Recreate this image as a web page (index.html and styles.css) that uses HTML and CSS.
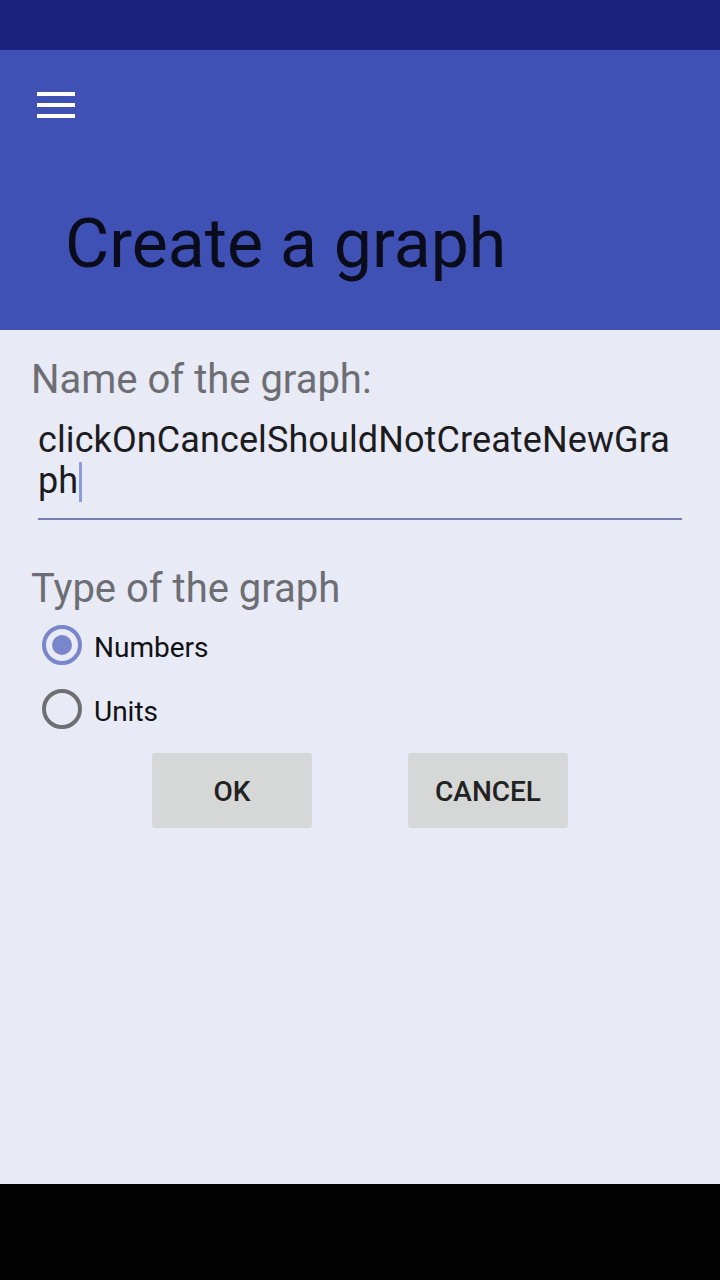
FILE: index.html
```html
<!DOCTYPE html>
<html lang="en">
<head>
<meta charset="utf-8">
<title>Create a graph</title>
<link rel="stylesheet" href="styles.css">
</head>
<body>
<div class="screen">
  <div class="status-bar"></div>
  <header class="app-bar">
    <div class="menu-btn">
      <svg width="38" height="26" viewBox="0 0 38 26" aria-hidden="true">
        <rect x="0" y="0" width="38" height="4" fill="#ffffff"/>
        <rect x="0" y="11" width="38" height="4" fill="#ffffff"/>
        <rect x="0" y="22" width="38" height="4" fill="#ffffff"/>
      </svg>
    </div>
    <h1 class="title">Create a graph</h1>
  </header>
  <main class="content">
    <div class="label name-label">Name of the graph:</div>
    <div class="field"><span class="value">clickOnCancelShouldNotCreateNewGraph</span><span class="cursor"></span></div>
    <div class="label type-label">Type of the graph</div>
    <div class="radios">
      <div class="radio-row">
        <span class="radio checked"><span class="dot"></span></span>
        <span class="radio-text">Numbers</span>
      </div>
      <div class="radio-row">
        <span class="radio"></span>
        <span class="radio-text">Units</span>
      </div>
    </div>
    <div class="buttons">
      <div class="btn">OK</div>
      <div class="btn">CANCEL</div>
    </div>
  </main>
  <div class="nav-bar"></div>
</div>
</body>
</html>
```

FILE: styles.css
```css
html, body {
  margin: 0;
  padding: 0;
}
body {
  font-family: Roboto, "Noto Sans", "Liberation Sans", sans-serif;
  background: #E8EAF6;
}
.screen {
  width: 720px;
  height: 1280px;
  display: flex;
  flex-direction: column;
  overflow: hidden;
}
.status-bar {
  height: 50px;
  background: #1A237E;
  flex: none;
}
.app-bar {
  height: 280px;
  background: #3F51B5;
  flex: none;
  box-sizing: border-box;
  padding-top: 42px;
  display: flex;
  flex-direction: column;
}
.menu-btn {
  margin-left: 37px;
  width: 38px;
  height: 26px;
}
.menu-btn svg {
  display: block;
}
.title {
  margin: 86px 0 0 65px;
  font-weight: 400;
  font-size: 68px;
  line-height: 80px;
  color: #0A0C1B;
}
.content {
  flex: 1;
  background: #E8EAF6;
  display: flex;
  flex-direction: column;
}
.label {
  font-size: 40px;
  line-height: 47px;
  color: #6D6E73;
  margin-left: 31px;
}
.name-label {
  margin-top: 26px;
}
.field {
  margin: 17px 38px 0 38px;
  width: 644px;
  font-size: 36px;
  line-height: 41px;
  letter-spacing: 0.1px;
  color: #1C1C1F;
  word-break: break-all;
  padding-bottom: 16px;
  border-bottom: 2px solid #767DB2;
}
.cursor {
  display: inline-block;
  width: 3px;
  height: 40px;
  background: #8E9BDD;
  vertical-align: -9px;
  margin-left: 1px;
}
.type-label {
  margin-top: 45px;
}
.radios {
  margin-top: 1px;
  margin-left: 42px;
  display: flex;
  flex-direction: column;
}
.radio-row {
  height: 64px;
  display: flex;
  align-items: center;
  gap: 12px;
}
.radio {
  width: 40px;
  height: 40px;
  box-sizing: border-box;
  border: 4px solid #6F6F73;
  border-radius: 50%;
  display: flex;
  align-items: center;
  justify-content: center;
}
.radio.checked {
  border-color: #7986CB;
}
.dot {
  width: 20px;
  height: 20px;
  border-radius: 50%;
  background: #7986CB;
}
.radio-text {
  font-size: 28px;
  padding-top: 4px;
  color: #111114;
}
.buttons {
  margin-top: 12px;
  display: flex;
  justify-content: center;
  gap: 96px;
}
.btn {
  width: 160px;
  height: 75px;
  background: #D6D7D7;
  border-radius: 3px;
  display: flex;
  align-items: center;
  justify-content: center;
  font-size: 28px;
  font-weight: 500;
  color: #222222;
  padding-top: 2px;
  box-sizing: border-box;
}
.nav-bar {
  height: 96px;
  background: #020202;
  flex: none;
}
```
